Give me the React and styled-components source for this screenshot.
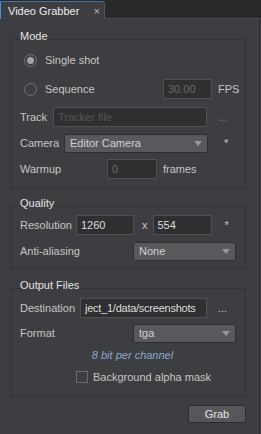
import styled, { createGlobalStyle } from "styled-components";

const Global = createGlobalStyle`
  html, body {
    margin: 0;
    padding: 0;
    background: #3d3e41;
  }
  body {
    font-family: "Liberation Sans", Arial, sans-serif;
    font-size: 11px;
    color: #c6c6c6;
  }
`;

const Window = styled.div`
  width: 261px;
  height: 434px;
  display: flex;
  flex-direction: column;
  overflow: hidden;
`;

const TopBar = styled.div`
  height: 18px;
  background: #28292b;
  border-bottom: 1px solid #4b4c4f;
  display: flex;
  align-items: flex-end;
`;

const Tab = styled.div`
  width: 105px;
  height: 18px;
  margin-bottom: -1px;
  box-sizing: border-box;
  background: #3d3e41;
  border-left: 1px solid #4f8fd8;
  border-top: 1px solid #4a6f99;
  border-right: 1px solid #55565a;
  border-top-right-radius: 3px;
  display: flex;
  align-items: center;
  padding-left: 7px;
  color: #ececec;
`;

const Close = styled.span`
  margin-left: auto;
  margin-right: 4px;
  color: #b8b8b8;
  font-size: 11px;
`;

const Panel = styled.div`
  flex: 1;
  padding: 10px 0 0 11px;
  border-right: 1px solid #2c2d2f;
  margin-right: 1px;
  display: flex;
  flex-direction: column;
`;

const Title = styled.div`
  position: relative;
  z-index: 1;
  height: 14px;
  line-height: 14px;
  padding-left: 9px;
  margin-top: ${(p) => p.$mt || 0}px;
  color: #e2e2e2;
`;

const Group = styled.div`
  width: 235px;
  box-sizing: border-box;
  margin-top: -4px;
  border: 1px solid #313235;
  border-radius: 2px;
  padding: ${(p) => p.$pt}px 0 ${(p) => p.$pb}px 8px;
  display: flex;
  flex-direction: column;
`;

const Row = styled.div`
  height: 20px;
  margin-top: ${(p) => p.$mt || 0}px;
  display: flex;
  align-items: center;
  justify-content: ${(p) => (p.$center ? "center" : "flex-start")};
`;

const Label = styled.span`
  width: ${(p) => p.$w}px;
  flex-shrink: 0;
  white-space: nowrap;
`;

const RadioLabel = styled.label`
  width: ${(p) => p.$w || 143}px;
  display: flex;
  align-items: center;
  padding-left: 4px;
  box-sizing: border-box;
`;

const RadioCircle = styled.span`
  width: 13px;
  height: 13px;
  box-sizing: border-box;
  border-radius: 50%;
  border: 1px solid #737477;
  margin-right: 8px;
  display: flex;
  align-items: center;
  justify-content: center;
  &::after {
    content: "";
    width: 7px;
    height: 7px;
    border-radius: 50%;
    background: ${(p) => (p.$on ? "#a3a4a6" : "transparent")};
  }
`;

const Field = styled.div`
  width: ${(p) => p.$w}px;
  height: 20px;
  box-sizing: border-box;
  flex-shrink: 0;
  margin-left: ${(p) => p.$ml || 0}px;
  background: #2e2f31;
  border: 1px solid #505154;
  padding: 0 3px 0 4px;
  display: flex;
  align-items: center;
  overflow: hidden;
  white-space: nowrap;
  letter-spacing: ${(p) => (p.$tight ? "-0.25px" : "0")};
  color: ${(p) => (p.$dim ? "#6a6b6e" : p.$faint ? "#55565a" : "#dcdcdc")};
`;

const Select = styled.div`
  width: ${(p) => p.$w}px;
  height: 19px;
  box-sizing: border-box;
  flex-shrink: 0;
  background: #58595c;
  border: 1px solid #2d2e30;
  border-radius: 2px;
  padding: 0 5px;
  display: flex;
  align-items: center;
  color: #d2d2d2;
  svg {
    margin-left: auto;
  }
`;

const Suffix = styled.span`
  margin-left: ${(p) => p.$ml}px;
  color: ${(p) => (p.$dim ? "#7c7d80" : "#c6c6c6")};
  white-space: nowrap;
`;

const Note = styled.span`
  font-style: italic;
  color: #8ea6cf;
`;

const CheckLabel = styled.label`
  display: flex;
  align-items: center;
  padding-left: 56px;
`;

const Box = styled.span`
  width: 12px;
  height: 12px;
  box-sizing: border-box;
  border: 1px solid #6c6d70;
  margin-right: 5px;
`;

const Footer = styled.div`
  width: 235px;
  display: flex;
  justify-content: flex-end;
  margin-top: 8px;
`;

const Button = styled.button`
  width: 58px;
  height: 18px;
  background: #56575a;
  border: 1px solid #2b2c2e;
  border-radius: 2px;
  color: #e6e6e6;
  font-family: inherit;
  font-size: 11px;
  padding: 0;
`;

const Arrow = () => (
  <svg width="8" height="5" viewBox="0 0 8 5">
    <polygon points="0,0 8,0 4,5" fill="#98999b" />
  </svg>
);

const App = () => {
  return (
    <Window>
      <Global />
      <TopBar>
        <Tab>
          Video Grabber
          <Close>×</Close>
        </Tab>
      </TopBar>
      <Panel>
        <Title>Mode</Title>
        <Group $pt={10} $pb={9}>
          <Row>
            <RadioLabel>
              <RadioCircle $on />
              Single shot
            </RadioLabel>
          </Row>
          <Row $mt={9}>
            <RadioLabel>
              <RadioCircle />
              Sequence
            </RadioLabel>
            <Field $w={49} $dim>30.00</Field>
            <Suffix $ml={6}>FPS</Suffix>
          </Row>
          <Row $mt={8}>
            <Label $w={33}>Track</Label>
            <Field $w={154} $faint>Tracker file</Field>
            <Suffix $ml={11} $dim>...</Suffix>
          </Row>
          <Row $mt={6}>
            <Label $w={44}>Camera</Label>
            <Select $w={144}>
              Editor Camera
              <Arrow />
            </Select>
            <Suffix $ml={16}>*</Suffix>
          </Row>
          <Row $mt={6}>
            <Label $w={87}>Warmup</Label>
            <Field $w={50} $dim>0</Field>
            <Suffix $ml={6}>frames</Suffix>
          </Row>
        </Group>

        <Title $mt={7}>Quality</Title>
        <Group $pt={8} $pb={7}>
          <Row>
            <Label $w={56}>Resolution</Label>
            <Field $w={58}>1260</Field>
            <Suffix $ml={8}>x</Suffix>
            <Field $w={59} $ml={5}>554</Field>
            <Suffix $ml={13}>*</Suffix>
          </Row>
          <Row $mt={6}>
            <Label $w={113}>Anti-aliasing</Label>
            <Select $w={103}>
              None
              <Arrow />
            </Select>
          </Row>
        </Group>

        <Title $mt={9}>Output Files</Title>
        <Group $pt={9} $pb={9}>
          <Row>
            <Label $w={60}>Destination</Label>
            <Field $w={127} $tight>ject_1/data/screenshots</Field>
            <Suffix $ml={11}>...</Suffix>
          </Row>
          <Row $mt={5}>
            <Label $w={113}>Format</Label>
            <Select $w={103}>
              tga
              <Arrow />
            </Select>
          </Row>
          <Row $mt={2} $center>
            <Note>8 bit per channel</Note>
          </Row>
          <Row $mt={2}>
            <CheckLabel>
              <Box />
              Background alpha mask
            </CheckLabel>
          </Row>
        </Group>

        <Footer>
          <Button>Grab</Button>
        </Footer>
      </Panel>
    </Window>
  );
};

export default App;
